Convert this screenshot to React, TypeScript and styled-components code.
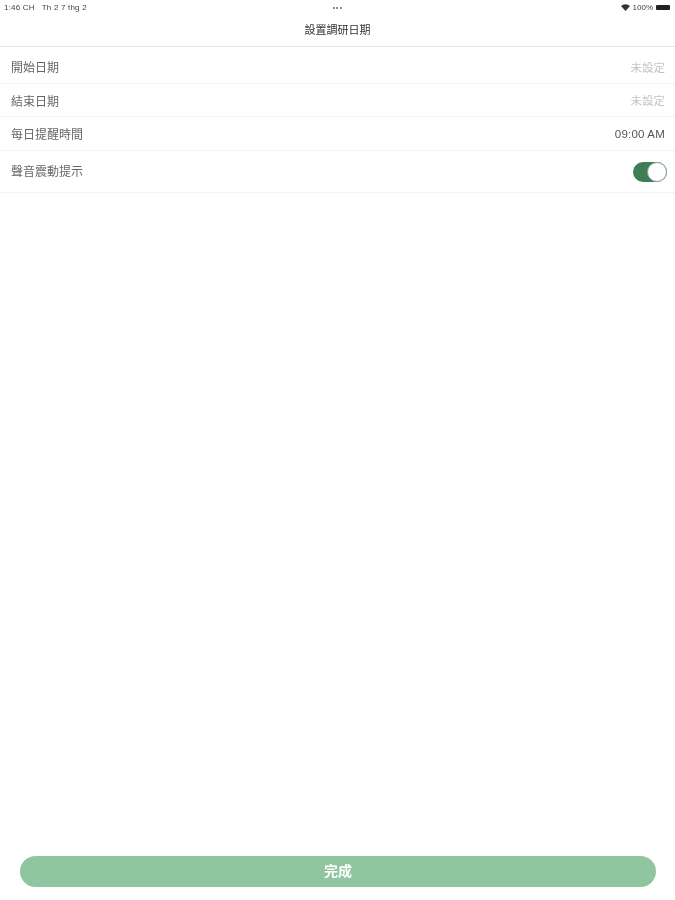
import * as React from "react"
import styled, { createGlobalStyle } from "styled-components"

type RowData = {
  label: string
  value: string
  muted?: boolean
  height: number
  top?: number
}

const rows: RowData[] = [
  { label: "開始日期", value: "未設定", muted: true, height: 37, top: 3 },
  { label: "結束日期", value: "未設定", muted: true, height: 33 },
  { label: "每日提醒時間", value: "09:00 AM", height: 34 },
]

const GlobalStyle = createGlobalStyle`
  html, body {
    margin: 0;
    padding: 0;
    background: #fff;
  }
  body {
    font-family: "Liberation Sans", "Noto Sans CJK TC", sans-serif;
  }
`

const Screen = styled.div`
  width: 675px;
  height: 900px;
  display: flex;
  flex-direction: column;
  background: #fff;
  overflow: hidden;
  filter: blur(0.6px);
`

const StatusBar = styled.div`
  height: 14px;
  padding: 0 5px 0 4px;
  display: grid;
  grid-template-columns: 1fr auto 1fr;
  align-items: center;
  font-size: 8px;
  color: #444;
`

const StatusTime = styled.div`
  display: flex;
  gap: 7px;
  letter-spacing: 0.2px;
`

const Dots = styled.div`
  display: flex;
  gap: 1.5px;
  position: relative;
  top: 1px;
`

const Dot = styled.span`
  width: 2px;
  height: 2px;
  border-radius: 50%;
  background: #666;
`

const StatusRight = styled.div`
  display: flex;
  justify-content: flex-end;
  align-items: center;
  gap: 3px;
`

const Battery = styled.span`
  width: 14px;
  height: 5px;
  border-radius: 1px;
  background: #222;
`

const NavBar = styled.div`
  height: 33px;
  display: flex;
  align-items: center;
  justify-content: center;
  padding-bottom: 2px;
  box-sizing: border-box;
  border-bottom: 1px solid #e6e6e6;
  font-size: 11px;
  color: #333;
`

const List = styled.div`
  display: flex;
  flex-direction: column;
`

const Row = styled.div<{ $height: number; $top?: number; $bottom?: number }>`
  height: ${props => props.$height}px;
  box-sizing: border-box;
  padding: ${props => props.$top ?? 0}px 10px ${props => props.$bottom ?? 0}px 11px;
  display: flex;
  align-items: center;
  justify-content: space-between;
  border-bottom: 1px solid #f3f3f3;
`

const Label = styled.span`
  font-size: 12px;
  color: #666;
`

const Value = styled.span<{ $muted?: boolean }>`
  font-size: 11.5px;
  letter-spacing: ${props => (props.$muted ? "0" : "0.2px")};
  color: ${props => (props.$muted ? "#c4c4c4" : "#555")};
`

const Toggle = styled.div`
  width: 34px;
  height: 20px;
  margin: 3px -2px 0 0;
  box-sizing: border-box;
  display: flex;
  justify-content: flex-end;
  align-items: center;
  border-radius: 10px;
  background: #3f7d56;
`

const Knob = styled.span`
  width: 20px;
  height: 20px;
  box-sizing: border-box;
  border-radius: 50%;
  background: #fff;
  border: 1px solid #8fa898;
`

const Spacer = styled.div`
  flex: 1;
`

const Footer = styled.div`
  padding: 0 19px 13px 20px;
`

const DoneButton = styled.div`
  height: 31px;
  padding-bottom: 3px;
  box-sizing: border-box;
  display: flex;
  align-items: center;
  justify-content: center;
  border-radius: 16px;
  background: #8fc6a0;
  color: #fff;
  font-size: 14px;
  font-weight: 700;
`

export default function App() {
  return (
    <>
      <GlobalStyle />
      <Screen>
        <StatusBar>
          <StatusTime>
            <span>1:46 CH</span>
            <span>Th 2 7 thg 2</span>
          </StatusTime>
          <Dots>
            <Dot />
            <Dot />
            <Dot />
          </Dots>
          <StatusRight>
            <svg width="9" height="7" viewBox="0 0 9 7">
              <path d="M0 2 A6.5 6.5 0 0 1 9 2 L4.5 7 Z" fill="#333" />
            </svg>
            <span>100%</span>
            <Battery />
          </StatusRight>
        </StatusBar>
        <NavBar>設置調研日期</NavBar>
        <List>
          {rows.map(row => (
            <Row key={row.label} $height={row.height} $top={row.top}>
              <Label>{row.label}</Label>
              <Value $muted={row.muted}>{row.value}</Value>
            </Row>
          ))}
          <Row $height={42} $bottom={3}>
            <Label>聲音震動提示</Label>
            <Toggle>
              <Knob />
            </Toggle>
          </Row>
        </List>
        <Spacer />
        <Footer>
          <DoneButton>完成</DoneButton>
        </Footer>
      </Screen>
    </>
  )
}
